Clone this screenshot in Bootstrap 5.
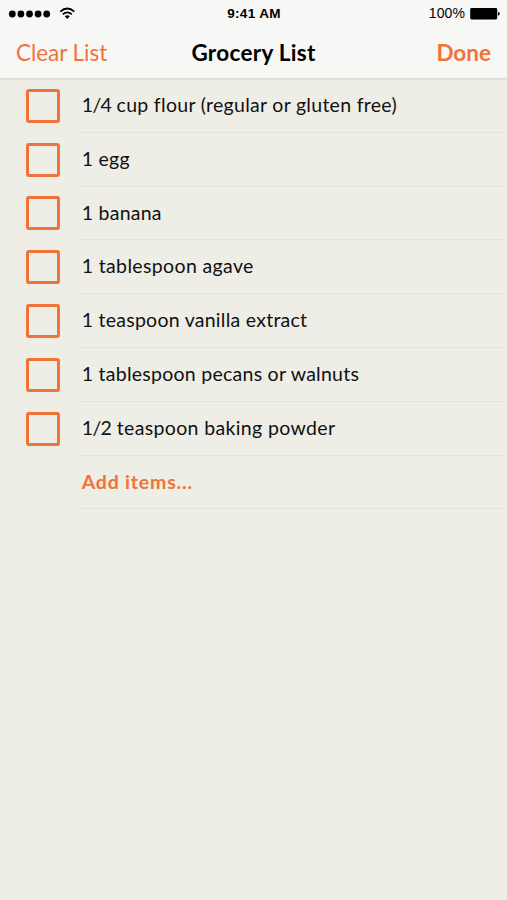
<!DOCTYPE html>
<html lang="en">
<head>
<meta charset="utf-8">
<meta name="viewport" content="width=device-width, initial-scale=1">
<title>Grocery List</title>
<link href="https://cdn.jsdelivr.net/npm/bootstrap@5.3.0/dist/css/bootstrap.min.css" rel="stylesheet">
<style>
body{background:#eeede6;font-family:Lato,sans-serif;color:#111;min-height:100vh;overflow:hidden}
.top-bar{background:#f7f7f6;height:79px;border-bottom:1px solid #dcdcd8;box-shadow:0 1px 1px #e3e3de}
.status{height:27px;padding:0 7px 0 8px;font:13.5px/27px "Liberation Sans",sans-serif;color:#000}
.side{flex:1 1 0}
.clock{font-weight:700;font-size:13.5px;letter-spacing:.35px}
.charge{font-size:14px;letter-spacing:.1px}
.title-row{height:51px;padding:0 16px;font-size:22.5px;line-height:48px;white-space:nowrap}
.accent{color:#f07338}
.title-row .clear-btn,.title-row .done-btn{font-size:inherit;line-height:inherit;display:block}
.title-row .done-btn{margin-left:auto}
.clear-btn{letter-spacing:-.05px}
.heading{font-size:22.5px;line-height:49px;letter-spacing:.3px;color:#000}
.items{font-size:19.5px;letter-spacing:.26px}
.item{height:53.8px;padding-left:25.5px}
.item-text{height:100%;padding-left:.7px;border-bottom:1px solid #e2e2de;line-height:52.4px;white-space:nowrap}
.fraction{letter-spacing:-.6px}
.measured{letter-spacing:.36px}
.measured-small{letter-spacing:.29px}
.add-row .item-text{letter-spacing:.8px}
.item .tick{width:34px;height:34px;margin:0 21.5px 0 0;border:3px solid #f07338;border-radius:3px;background:transparent;flex:none}
.item .tick:checked{background-color:#f07338}
.add-row{padding-left:81px}
</style>
<script src="https://cdn.jsdelivr.net/npm/bootstrap@5.3.0/dist/js/bootstrap.bundle.min.js"></script>
</head>
<body>
<header class="top-bar position-relative">
  <div class="status d-flex align-items-center">
    <div class="side d-flex align-items-center">
      <svg width="68" height="14" viewBox="0 0 68 14" aria-hidden="true">
        <g fill="#000"><circle cx="4.3" cy="7" r="3.4"/><circle cx="12.9" cy="7" r="3.4"/><circle cx="21.5" cy="7" r="3.4"/><circle cx="30.1" cy="7" r="3.4"/><circle cx="38.7" cy="7" r="3.4"/></g>
        <g fill="none" stroke="#000" stroke-width="1.8"><path d="M52.3 4.6Q59.3-1.6 66.3 4.6"/><path d="M54.8 7.4Q59.3 3.4 63.8 7.4"/></g>
        <path d="M56.8 9.3Q59.3 7.2 61.8 9.3L59.3 12Z" fill="#000"/>
      </svg>
    </div>
    <div class="clock">9:41 AM</div>
    <div class="side d-flex align-items-center justify-content-end">
      <span class="charge">100%</span>
      <svg class="ms-1" width="31" height="12" viewBox="0 0 31 12" aria-hidden="true"><rect x="1.2" y="0" width="27" height="11.5" rx="1.4"/><path d="M29 3.7q1.8.5 1.8 2t-1.8 2z"/></svg>
    </div>
  </div>
  <div class="title-row d-flex align-items-center">
    <div class="side"><button class="btn clear-btn accent border-0 p-0">Clear List</button></div>
    <h1 class="heading fw-bold m-0">Grocery List</h1>
    <div class="side"><button class="btn done-btn accent fw-bold border-0 p-0">Done</button></div>
  </div>
</header>
<main class="items">
  <label class="item d-flex align-items-center"><input class="form-check-input tick" type="checkbox"><span class="item-text measured-small flex-grow-1"><span class="fraction">1/4</span> cup flour (regular or gluten free)</span></label>
  <label class="item d-flex align-items-center"><input class="form-check-input tick" type="checkbox"><span class="item-text flex-grow-1">1 egg</span></label>
  <label class="item d-flex align-items-center"><input class="form-check-input tick" type="checkbox"><span class="item-text flex-grow-1">1 banana</span></label>
  <label class="item d-flex align-items-center"><input class="form-check-input tick" type="checkbox"><span class="item-text measured flex-grow-1">1 tablespoon agave</span></label>
  <label class="item d-flex align-items-center"><input class="form-check-input tick" type="checkbox"><span class="item-text flex-grow-1">1 teaspoon vanilla extract</span></label>
  <label class="item d-flex align-items-center"><input class="form-check-input tick" type="checkbox"><span class="item-text flex-grow-1">1 tablespoon pecans or walnuts</span></label>
  <label class="item d-flex align-items-center"><input class="form-check-input tick" type="checkbox"><span class="item-text measured flex-grow-1"><span class="fraction">1/2</span> teaspoon baking powder</span></label>
  <div class="item add-row d-flex"><span class="item-text accent fw-bold flex-grow-1">Add items...</span></div>
</main>
</body>
</html>
